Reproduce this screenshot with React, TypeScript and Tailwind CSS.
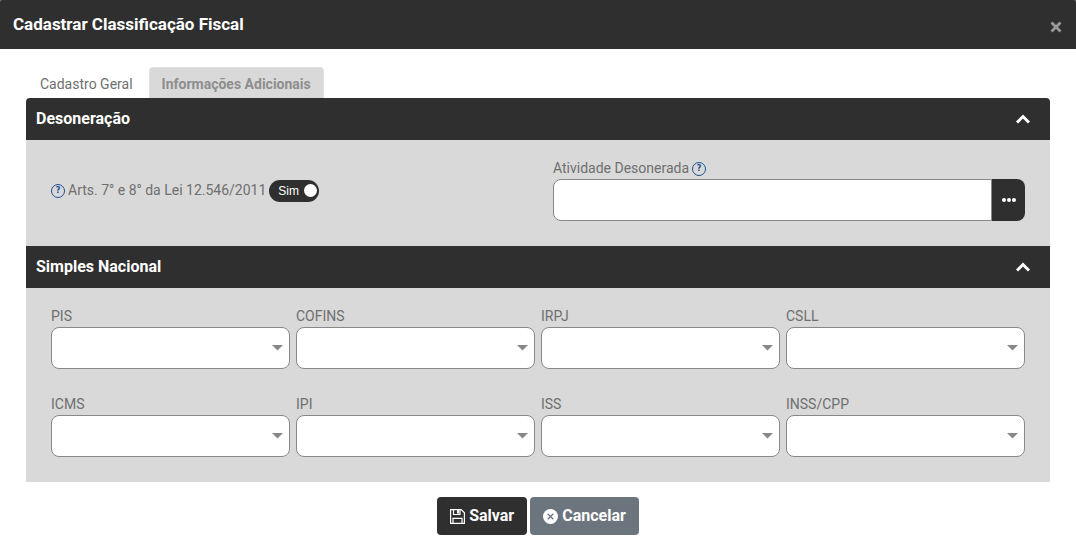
import React, { useState } from 'react';

const taxFields = [
  { id: 'pis', label: 'PIS' },
  { id: 'cofins', label: 'COFINS' },
  { id: 'irpj', label: 'IRPJ' },
  { id: 'csll', label: 'CSLL' },
  { id: 'icms', label: 'ICMS' },
  { id: 'ipi', label: 'IPI' },
  { id: 'iss', label: 'ISS' },
  { id: 'inss', label: 'INSS/CPP' },
];

const HelpIcon = () => (
  <span className="inline-flex h-3.5 w-3.5 shrink-0 items-center justify-center rounded-full border border-[#1c4f93] font-['DejaVu_Sans',sans-serif] text-[8px] leading-none font-bold text-[#1c4f93]">
    ?
  </span>
);

const SaveIcon = () => (
  <svg className="h-[15px] w-[15px]" viewBox="0 0 15 15" fill="none" stroke="currentColor" aria-hidden="true">
    <path d="M.6.6h10.6l3.2 3.2v10.6h-13.8z" strokeWidth="1.2" />
    <path d="M3.5.6v4.9h6.5v-4.9M3 14.4v-5h9v5" strokeWidth="1.2" />
    <path d="M7 1h2v3.5h-2z" fill="currentColor" stroke="none" />
  </svg>
);

const CancelIcon = () => (
  <svg className="h-[15px] w-[15px]" viewBox="0 0 15 15" fill="none" aria-hidden="true">
    <circle cx="7.5" cy="7.5" r="7.5" fill="currentColor" />
    <path d="M4.7 4.7l5.6 5.6M10.3 4.7l-5.6 5.6" stroke="#6c757d" strokeWidth="1.3" />
  </svg>
);

interface SectionProps {
  title: string;
  className?: string;
  children: React.ReactNode;
}

const Section = ({ title, className = '', children }: SectionProps) => {
  const [open, setOpen] = useState(true);

  return (
    <section>
      <button
        type="button"
        aria-expanded={open}
        onClick={() => setOpen(!open)}
        className={`flex h-[42px] w-full items-center justify-between bg-[#2f2f2f] pr-5 pl-2.5 text-base font-bold text-white ${className}`}
      >
        <span>{title}</span>
        <svg className="h-3.5 w-3.5" viewBox="0 0 14 14" fill="none" stroke="currentColor" strokeWidth="3" aria-hidden="true">
          <path d="M1 10.5l6-6 6 6" />
        </svg>
      </button>
      {open && <div className="bg-[#d9d9d9] px-[25px] pt-[18px] pb-[25px]">{children}</div>}
    </section>
  );
};

const App = () => {
  const [desonerado, setDesonerado] = useState(true);
  const [atividade, setAtividade] = useState('');

  return (
    <div className="bg-neutral-500 font-[Roboto,sans-serif] text-sm leading-[21px] text-[#6f6f6f]">
      <header className="flex h-[49px] items-center justify-between rounded-t-[3px] bg-[#2f2f2f] pr-3.5 pl-[13px]">
        <h1 className="text-[17px] font-bold text-white">Cadastrar Classificação Fiscal</h1>
        <button type="button" aria-label="Fechar" className="pt-1 text-[#999]">
          <svg className="h-3 w-3" viewBox="0 0 12 12" fill="none" stroke="currentColor" strokeWidth="2.8">
            <path d="M1.5 1.5l9 9M10.5 1.5l-9 9" />
          </svg>
        </button>
      </header>

      <main className="bg-white px-[26px] pt-[18px] pb-3">
        <nav className="flex h-[31px]">
          <button type="button" className="px-3.5 pt-1">
            Cadastro Geral
          </button>
          <button type="button" className="ml-0.5 rounded-t border border-b-0 border-[#dee2e6] bg-[#d9d9d9] px-3 pt-0.5 font-bold text-[#8e8e8e]">
            Informações Adicionais
          </button>
        </nav>

        <Section title="Desoneração" className="rounded-t">
          <div className="grid grid-cols-2 gap-[30px]">
            <div className="flex items-center gap-[3px] pt-0.5">
              <HelpIcon />
              <span id="lei-label">Arts. 7° e 8° da Lei 12.546/2011</span>
              <button
                type="button"
                role="switch"
                aria-checked={desonerado}
                aria-labelledby="lei-label"
                onClick={() => setDesonerado(!desonerado)}
                className="flex h-[22px] w-[50px] items-center justify-between rounded-full bg-[#2f2f2f] pr-0.5 pl-[9px] font-['Liberation_Sans',sans-serif] text-xs text-white"
              >
                {desonerado ? 'Sim' : 'Não'}
                <span className="h-[13px] w-[13px] rounded-full bg-white" />
              </button>
            </div>
            <div>
              <div className="flex items-center gap-[3px]">
                <label htmlFor="atividade">Atividade Desonerada</label>
                <HelpIcon />
              </div>
              <div className="flex h-[42px]">
                <input
                  id="atividade"
                  type="text"
                  value={atividade}
                  onChange={(e) => setAtividade(e.target.value)}
                  className="min-w-0 flex-1 rounded-l-lg border border-[#888] bg-white px-3"
                />
                <button
                  type="button"
                  aria-label="Pesquisar atividade"
                  className="flex w-[33px] items-center justify-center gap-px rounded-r-lg bg-[#2f2f2f]"
                >
                  <span className="h-1 w-1 rounded-full bg-white" />
                  <span className="h-1 w-1 rounded-full bg-white" />
                  <span className="h-1 w-1 rounded-full bg-white" />
                </button>
              </div>
            </div>
          </div>
        </Section>

        <Section title="Simples Nacional">
          <div className="grid grid-cols-4 gap-x-1.5 gap-y-[25px]">
            {taxFields.map((field) => (
              <div key={field.id}>
                <label htmlFor={field.id} className="block">
                  {field.label}
                </label>
                <div className="relative">
                  <select
                    id={field.id}
                    className="block h-[42px] w-full appearance-none rounded-lg border border-[#888] bg-white px-3"
                  >
                    <option value=""></option>
                  </select>
                  <svg
                    className="pointer-events-none absolute top-[18px] right-[7px] h-1.5 w-[11px] text-[#888]"
                    viewBox="0 0 11 6"
                    fill="currentColor"
                    aria-hidden="true"
                  >
                    <path d="M0 0h11l-5.5 5.5z" />
                  </svg>
                </div>
              </div>
            ))}
          </div>
        </Section>

        <footer className="mt-[15px] flex justify-center gap-[3px]">
          <button type="button" className="flex h-[38px] items-center gap-1 rounded bg-[#2f2f2f] px-[13px] text-base font-bold text-white">
            <SaveIcon />
            Salvar
          </button>
          <button type="button" className="flex h-[38px] items-center gap-1 rounded bg-[#6c757d] px-[13px] text-base font-bold text-white">
            <CancelIcon />
            Cancelar
          </button>
        </footer>
      </main>
    </div>
  );
};

export default App;
